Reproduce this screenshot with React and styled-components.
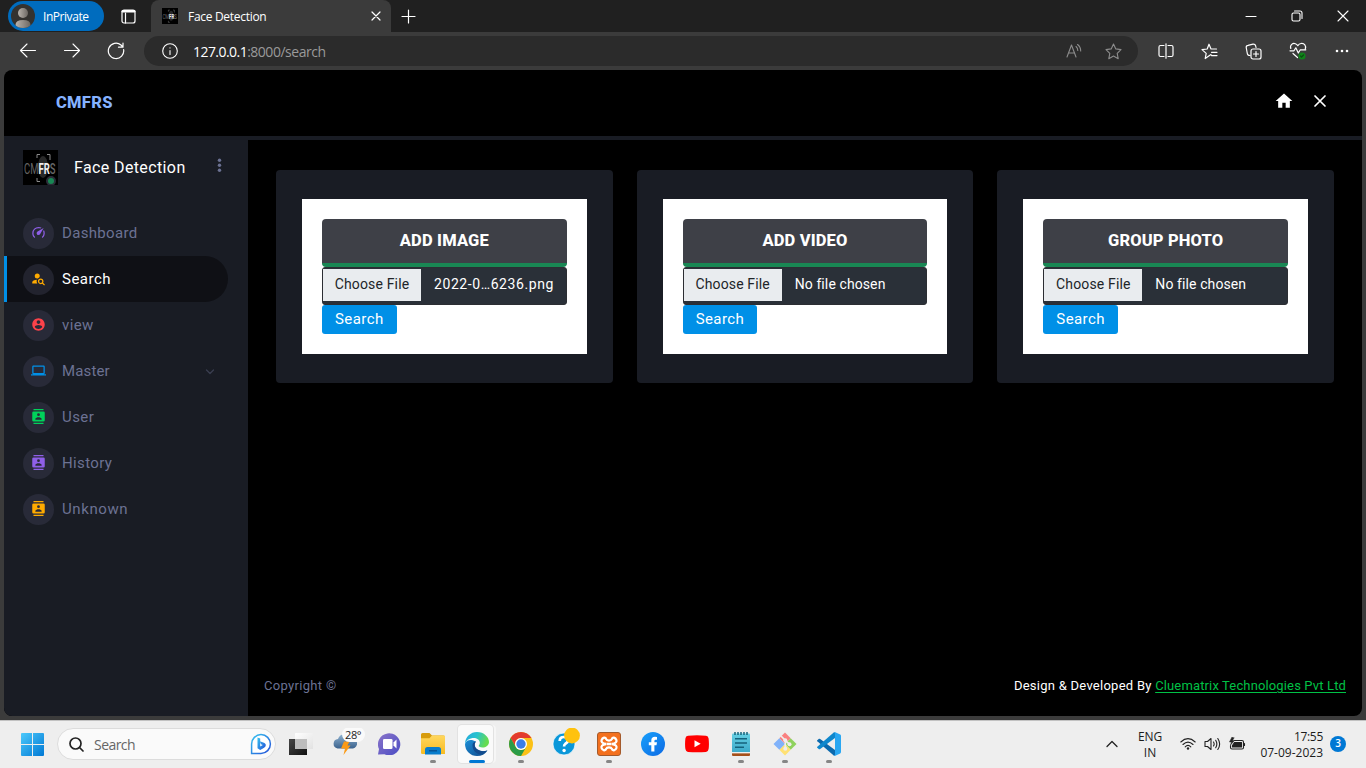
import React from "react";
import styled, { createGlobalStyle, css } from "styled-components";

const Global = createGlobalStyle`
  * { box-sizing: border-box; }
  body { margin: 0; background: #3b3b3b; overflow: hidden; }
  svg { display: block; flex: none; }
`;

const ui = `"Open Sans", "Noto Sans", sans-serif`;
const web = `Roboto, "Liberation Sans", sans-serif`;

const Screen = styled.div`
  width: 1366px;
  height: 768px;
  display: flex;
  flex-direction: column;
  background: #3b3b3b;
  font-family: ${ui};
  overflow: hidden;
`;

const Text = styled.span`
  font-size: ${(p) => p.$size || 12}px;
  letter-spacing: ${(p) => p.$track || 0}px;
  color: ${(p) => p.$color || "#fff"};
  font-weight: ${(p) => p.$weight || 400};
  white-space: pre;
`;

/* Browser frame */
const TabStrip = styled.header`
  height: 32px;
  flex: none;
  display: flex;
  align-items: center;
  padding-left: 8px;
  background: #202020;
`;
const Profile = styled.div`
  width: 96px;
  height: 30px;
  border-radius: 15px;
  background: #006cbe;
  display: flex;
  align-items: center;
  gap: 8px;
  padding-left: 3px;
`;
const WorkspaceButton = styled.div`
  width: 47px;
  display: flex;
  justify-content: center;
  padding-left: 1px;
`;
const Tab = styled.div`
  width: 240px;
  height: 32px;
  border-radius: 8px 8px 0 0;
  background: #3b3b3b;
  display: flex;
  align-items: center;
  padding: 0 10.5px 0 11px;
  gap: 10px;
  svg:last-child { margin-left: auto; }
`;
const NewTab = styled.div`
  width: 34px;
  display: flex;
  justify-content: center;
`;
const WindowControls = styled.div`
  margin-left: auto;
  display: grid;
  grid-template-columns: repeat(3, 46px);
  justify-items: center;
  align-items: center;
`;
const Toolbar = styled.nav`
  height: 38px;
  flex: none;
  display: flex;
  align-items: center;
  padding-left: 6px;
`;
const ToolButton = styled.div`
  width: 44px;
  height: 30px;
  display: flex;
  align-items: center;
  justify-content: center;
`;
const Address = styled.div`
  width: 994px;
  height: 30px;
  margin: 0 5.5px 0 6px;
  border-radius: 15px;
  background: #2b2b2b;
  display: flex;
  align-items: center;
  padding: 0 16.5px 0 18px;
`;
const Url = styled.div`
  margin-left: 15px;
  flex: 1;
  line-height: 20px;
`;
const AddressActions = styled.div`
  display: flex;
  gap: 23px;
  align-items: center;
`;

/* Web page */
const Page = styled.div`
  height: 646px;
  flex: none;
  margin: 0 4px;
  border-radius: 8px;
  background: #000;
  overflow: hidden;
  display: flex;
  flex-direction: column;
  font-family: ${web};
`;
const PageHeader = styled.div`
  height: 66px;
  flex: none;
  display: flex;
  align-items: center;
  justify-content: space-between;
  padding: 0 34px 2px 52px;
`;
const HeaderActions = styled.div`
  display: flex;
  align-items: center;
  gap: 18px;
  padding-bottom: 2px;
`;
const PageBody = styled.div`
  flex: 1;
  display: flex;
  border-top: 4px solid #191c24;
`;
const Sidebar = styled.aside`
  width: 244px;
  background: #191c24;
  margin-top: -4px;
  padding-top: 14px;
`;
const Brand = styled.div`
  height: 35px;
  display: flex;
  align-items: center;
  padding: 0 23px 0 19px;
  margin-bottom: 25px;
`;
const BrandName = styled.div`
  margin-left: 16px;
  flex: 1;
  line-height: 20px;
`;
const Menu = styled.div`
  display: flex;
  flex-direction: column;
`;
const MenuItem = styled.div`
  width: 224px;
  height: 46px;
  display: flex;
  align-items: center;
  padding: 1px 12px 0 16px;
  border-left: 3px solid transparent;
  svg.chevron { margin-left: auto; }
  ${(p) => p.$active && css`
    background: #0f1015;
    border-left-color: #0090e7;
    border-radius: 0 23px 23px 0;
  `}
`;
const Bubble = styled.div`
  width: 31px;
  height: 31px;
  border-radius: 50%;
  background: ${(p) => (p.$active ? "#22232e" : "#282a38")};
  display: flex;
  align-items: center;
  justify-content: center;
  padding-bottom: 2px;
  margin-right: 8px;
  color: ${(p) => p.$color};
`;
const MenuLabel = styled.div`
  line-height: 20px;
  padding-bottom: 2px;
`;
const Main = styled.main`
  flex: 1;
  display: flex;
  flex-direction: column;
  justify-content: space-between;
`;
const Cards = styled.div`
  display: grid;
  grid-template-columns: repeat(3, 1fr);
  gap: 24px;
  padding: 30px 28px 0;
`;
const Card = styled.section`
  height: 213px;
  border-radius: 4px;
  background: #191c24;
  padding: 29px 26px;
`;
const Form = styled.div`
  height: 155px;
  background: #fff;
  padding: 20px;
  display: flex;
  flex-direction: column;
  align-items: flex-start;
`;
const FormTitle = styled.div`
  align-self: stretch;
  height: 48px;
  border-radius: 4px;
  border-bottom: 4px solid #198754;
  background: #3e4047;
  display: flex;
  align-items: center;
  justify-content: center;
  padding-bottom: 2px;
`;
const FileInput = styled.div`
  align-self: stretch;
  height: 38px;
  border-radius: 3px;
  background: #2a3038;
  border: 1px solid #2c2e33;
  display: flex;
  align-items: flex-start;
  line-height: 32px;
`;
const ChooseButton = styled.div`
  width: 98px;
  height: 32px;
  margin-top: 1px;
  background: #e9ecef;
  text-align: center;
  line-height: 30px;
  margin-right: 13px;
`;
const SubmitButton = styled.div`
  width: 74.6px;
  height: 29px;
  border-radius: 3px;
  background: #0090e7;
  text-align: center;
  line-height: 28px;
`;
const Footer = styled.footer`
  height: 60px;
  display: flex;
  justify-content: space-between;
  padding: 20px 16px 0;
  line-height: 20px;
`;
const Link = styled.span`
  color: #00c146;
  letter-spacing: 0.14px;
  text-decoration: underline;
  text-underline-offset: 2px;
`;

/* Desktop taskbar */
const Taskbar = styled.div`
  height: 48px;
  flex: none;
  margin-top: 4px;
  background: #eee;
  border-top: 1px solid #c2c2c2;
  display: flex;
  align-items: center;
  padding-left: 10px;
`;
const StartButton = styled.div`
  width: 44px;
  display: flex;
  justify-content: center;
`;
const SearchBox = styled.div`
  width: 219px;
  height: 32px;
  margin: 0 3px 1px 3px;
  border-radius: 16px;
  background: #fafafa;
  border: 1px solid #dcdcdc;
  display: flex;
  align-items: center;
  padding: 0 3px 0 11px;
  gap: 10px;
  svg:last-child { margin-left: auto; }
`;
const AppSlot = styled.div`
  width: 44px;
  height: 47px;
  display: grid;
  grid-template-rows: 32px 3px;
  justify-items: center;
  justify-content: center;
  align-content: start;
  align-items: center;
  padding-top: 7px;
  ${(p) => p.$active && css`
    width: 35px;
    margin: 4px 6px 0 3px;
    height: 38px;
    padding: 3px 0 0 2px;
    align-self: flex-start;
    border-radius: 4px;
    background: #fafafa;
    box-shadow: 0 0 0 1px #e2e2e2, 3px 0 0 #f6f6f6;
  `}
`;
const Indicator = styled.div`
  width: ${(p) => (p.$active ? 16 : 6)}px;
  height: 3px;
  border-radius: 2px;
  background: ${(p) => (p.$active ? "#0078d4" : p.$running ? "#868686" : "transparent")};
`;
const Tray = styled.div`
  margin-left: auto;
  display: flex;
  align-items: center;
  padding-right: 20px;
  padding-bottom: 1px;
`;
const Language = styled.div`
  width: 40px;
  margin: 2px 10px 0 12px;
  text-align: center;
  line-height: 16px;
  display: flex;
  flex-direction: column;
`;
const Status = styled.div`
  display: flex;
  gap: 8px;
  align-items: center;
`;
const Clock = styled.div`
  width: 72px;
  margin: 1px 7px 0 5px;
  display: flex;
  flex-direction: column;
  align-items: flex-end;
  line-height: 16px;
`;
const Badge = styled.div`
  width: 16px;
  height: 16px;
  border-radius: 50%;
  background: #0078d4;
  text-align: center;
  line-height: 15px;
  font-size: 10px;
  font-weight: 600;
  color: #fff;
`;

/* Stroke icon on a viewBox equal to its pixel size */
const Line = ({ w = 18, h = 18, d, c = "#fff", sw = 1.1, children, className }) => (
  <svg className={className} width={w} height={h} viewBox={`0 0 ${w} ${h}`} fill="none" stroke={c} strokeWidth={sw} strokeLinecap="round" strokeLinejoin="round">
    {d && <path d={d} />}
    {children}
  </svg>
);
const Solid = ({ size, d }) => (
  <svg width={size} height={size} viewBox="0 0 24 24" fill="currentColor"><path d={d} /></svg>
);

const CONTACTS = "M20,0H4V2H20V0M4,24H20V22H4V24M20,4H4A2,2 0 0,0 2,6V18A2,2 0 0,0 4,20H20A2,2 0 0,0 22,18V6A2,2 0 0,0 20,4M12,6.75A2.25,2.25 0 0,1 14.25,9A2.25,2.25 0 0,1 12,11.25A2.25,2.25 0 0,1 9.75,9A2.25,2.25 0 0,1 12,6.75M17,17H7V15.5C7,13.83 10.33,13 12,13C13.67,13 17,13.83 17,15.5V17Z";
const SPEED = "M12 16A3 3 0 0 1 9 13C9 11.88 9.61 10.9 10.5 10.39L20.21 4.77L14.68 14.35C14.18 15.33 13.17 16 12 16M12 3C13.81 3 15.5 3.5 16.97 4.32L14.87 5.53C14 5.19 13 5 12 5A8 8 0 0 0 4 13C4 15.21 4.89 17.21 6.34 18.65H6.35C6.74 19.04 6.74 19.67 6.35 20.06C5.96 20.45 5.32 20.45 4.93 20.07C3.12 18.26 2 15.76 2 13A10 10 0 0 1 12 3M22 13C22 15.76 20.88 18.26 19.07 20.07C18.68 20.45 18.05 20.45 17.66 20.06C17.27 19.67 17.27 19.04 17.66 18.65C19.11 17.2 20 15.21 20 13C20 12 19.81 11 19.46 10.1L20.67 8C21.5 9.5 22 11.18 22 13Z";
const PERSON_SEARCH = "M15.5,12C18,12 20,14 20,16.5C20,17.38 19.75,18.21 19.31,18.9L22.39,22L21,23.39L17.88,20.32C17.19,20.75 16.37,21 15.5,21C13,21 11,19 11,16.5C11,14 13,12 15.5,12M15.5,14A2.5,2.5 0 0,0 13,16.5A2.5,2.5 0 0,0 15.5,19A2.5,2.5 0 0,0 18,16.5A2.5,2.5 0 0,0 15.5,14M10,4A4,4 0 0,1 14,8C14,8.91 13.69,9.75 13.18,10.43C12.32,10.75 11.55,11.26 10.91,11.9L10,12A4,4 0 0,1 6,8A4,4 0 0,1 10,4M2,20V18C2,15.88 5.31,14.14 9.5,14C9.18,14.78 9,15.62 9,16.5C9,17.79 9.38,19 10,20H2Z";
const ACCOUNT = "M12 2C6.48 2 2 6.48 2 12s4.48 10 10 10 10-4.48 10-10S17.52 2 12 2zm0 3c1.66 0 3 1.34 3 3s-1.34 3-3 3-3-1.34-3-3 1.34-3 3-3zm0 14.2c-2.5 0-4.71-1.28-6-3.22.03-1.99 4-3.08 6-3.08 1.99 0 5.97 1.09 6 3.08-1.29 1.94-3.5 3.22-6 3.22z";
const LAPTOP = "M4,6H20V16H4M20,18A2,2 0 0,0 22,16V6C22,4.89 21.1,4 20,4H4C2.89,4 2,4.89 2,6V16A2,2 0 0,0 4,18H0V20H24V18H20Z";

const menu = [
  { label: "Dashboard", color: "#8f5fe8", d: SPEED, track: 0.32 },
  { label: "Search", color: "#ffab00", d: PERSON_SEARCH, active: true, track: 0.5 },
  { label: "view", color: "#fc424a", d: ACCOUNT, track: 0.4 },
  { label: "Master", color: "#0090e7", d: LAPTOP, chevron: true, track: 0.15 },
  { label: "User", color: "#00d25b", d: CONTACTS, track: 0.45 },
  { label: "History", color: "#8f5fe8", d: CONTACTS, track: 0.35 },
  { label: "Unknown", color: "#ffab00", d: CONTACTS, track: 0.6 },
];

const forms = [
  { title: "ADD IMAGE", file: "2022-0…6236.png", fileTrack: 0.58 },
  { title: "ADD VIDEO", file: "No file chosen", fileTrack: 0.1 },
  { title: "GROUP PHOTO", file: "No file chosen", fileTrack: 0.1 },
];

const LogoMark = ({ size, dot }) => (
  <svg width={size} height={size} viewBox="0 0 35 35">
    <rect width="35" height="35" fill="#000" />
    <ellipse cx="20" cy="17" rx="5" ry="11" fill="#292929" />
    <path d="M14 8V4.500H17M24 4.500H27V10M14 28V31.500H17" fill="none" stroke="#999" strokeWidth=".9" />
    <text x="1" y="23.500" textLength="31.500" lengthAdjust="spacingAndGlyphs" fontFamily="Roboto, sans-serif" fontSize="15.500" fill="#666">
      CM<tspan fill="#eee" fontWeight="700">FR</tspan><tspan fontWeight="500">S</tspan>
    </text>
    {dot && <circle cx="28" cy="31" r="4" fill="#198754" stroke="#2b2d38" strokeWidth="2" />}
  </svg>
);

const Avatar = () => (
  <svg width="24" height="24" viewBox="0 0 24 24">
    <defs>
      <linearGradient id="av" x1="0" x2="1"><stop stopColor="#b9b3ac" /><stop offset="1" stopColor="#6d6863" /></linearGradient>
      <clipPath id="avc"><circle cx="12" cy="12" r="12" /></clipPath>
    </defs>
    <g clipPath="url(#avc)">
      <rect width="24" height="24" fill="#34322f" />
      <circle cx="12" cy="9" r="5" fill="url(#av)" />
      <path d="M4.500 24v-3q0-5 7.500-5t7.500 5v3z" fill="url(#av)" />
    </g>
  </svg>
);

const WindowsLogo = () => (
  <svg width="23" height="23" viewBox="0 0 23 23">
    <defs><linearGradient id="wl" x1="0" y1="0" x2="1" y2="1"><stop stopColor="#4cc9fb" /><stop offset="1" stopColor="#0078d4" /></linearGradient></defs>
    <path fill="url(#wl)" d="M1 0H11V11H0V1Q0 0 1 0M12 0H22Q23 0 23 1V11H12ZM0 12H11V23H1Q0 23 0 22ZM12 12H23V22Q23 23 22 23H12Z" />
  </svg>
);

const BingLogo = () => (
  <svg width="22" height="22" viewBox="0 0 22 22">
    <defs><linearGradient id="bg" x1="0" y1="0" x2="1" y2="1"><stop stopColor="#37c4f0" /><stop offset="1" stopColor="#2450d8" /></linearGradient></defs>
    <path d="M1.600 20.400V11A9.400 9.400 0 1 1 11 20.400Z" fill="#fff" stroke="url(#bg)" strokeWidth="1.500" />
    <path d="M7.500 4.500L10.200 5.500V13.500L12.800 12.100L11 11.200L9.900 8.300L14.500 10Q16.300 10.800 15.700 13Q15.200 14.500 10.200 17L7.500 15.300Z" fill="url(#bg)" />
  </svg>
);

const TaskView = () => (
  <svg width="24" height="24" viewBox="0 0 24 24">
    <defs>
      <linearGradient id="tv" x1="0" y1="0" x2="1" y2="1"><stop stopColor="#474747" /><stop offset="1" stopColor="#111" /></linearGradient>
      <linearGradient id="tw" x1="0" y1="0" x2="1" y2="1"><stop stopColor="#fff" /><stop offset="1" stopColor="#e2e2e2" /></linearGradient>
    </defs>
    <path fill="url(#tv)" d="M0 7H18V23H0Z" />
    <rect x="6" y="1" width="18" height="16" rx=".6" fill="url(#tw)" />
    <rect x="6" y="7" width="12" height="10" fill="#bdbdbd" />
  </svg>
);

const Weather = () => (
  <svg width="42" height="32" viewBox="1 1 42 32">
    <defs><linearGradient id="cl" x1="0" y1="0" x2="0" y2="1"><stop stopColor="#8fb2d0" /><stop offset="1" stopColor="#3c638e" /></linearGradient></defs>
    <path d="M14.500 21.500A4.800 4.800 0 0 1 15 12A7 7 0 0 1 28 11.500A5 5 0 0 1 30 21.500Z" fill="url(#cl)" />
    <path d="M21 14.500H26.500L24.500 18.500H27.500L20.500 28L22 21.500H18Z" fill="#fb9a16" />
    <rect x="19" y="0" width="23" height="15" rx="7.500" fill="#fafafa" />
    <text x="22" y="12" fontSize="11" fill="#222" textLength="16.500">28°</text>
  </svg>
);

const Chat = () => (
  <svg width="23" height="22" viewBox="0 0 23 22">
    <defs><linearGradient id="ct" x1="0" y1="0" x2="1" y2="1"><stop stopColor="#8b75c9" /><stop offset="1" stopColor="#4a4cc4" /></linearGradient></defs>
    <path d="M0 21.500L1 16A11.200 11 0 1 1 6.500 21.300Z" fill="url(#ct)" />
    <rect x="5" y="6" width="9.500" height="10" rx="1.300" fill="#fff" />
    <path d="M15.500 9.500L18.500 6.500V15.500L15.500 12.500Z" fill="#fff" />
  </svg>
);

const Folder = () => (
  <svg width="24" height="22" viewBox="0 0 24 22">
    <defs><linearGradient id="fd" x1="0" y1="0" x2="0" y2="1"><stop stopColor="#ffd75e" /><stop offset="1" stopColor="#f7bb21" /></linearGradient></defs>
    <path d="M0 1.500Q0 0 1.500 0H8.500L11 2.500H22.500Q24 2.500 24 4V8H0Z" fill="#d79b0c" />
    <path d="M0 5.200H8.500L11 2.500H23Q24 2.500 24 3.500V21H1.500Q0 21 0 20Z" fill="url(#fd)" />
    <path d="M4 21V16.500Q4 14 6.500 14H17.500Q20 14 20 16.500V21.500H4Z" fill="#087dcc" />
    <path d="M8 17.800H16" stroke="#06508f" strokeWidth="1.300" />
  </svg>
);

const Edge = () => (
  <svg width="24" height="24" viewBox="0 0 24 24">
    <defs>
      <linearGradient id="e1" x1="0" y1="0" x2="1" y2=".3"><stop stopColor="#27a7dd" /><stop offset=".5" stopColor="#26c2cf" /><stop offset="1" stopColor="#66dc4f" /></linearGradient>
      <linearGradient id="e2" x1="0" y1="0" x2="1" y2="1"><stop stopColor="#1b8fd8" /><stop offset="1" stopColor="#114a8b" /></linearGradient>
    </defs>
    <path d="M0 12A12 12 0 0 0 12 24Q19 24 22.400 18.500Q17 20.500 12.500 17.500C9 15 8.500 12 11 9.500C6 6.500 1 8 0 12Z" fill="url(#e2)" />
    <path d="M0 11.500A12 12 0 0 1 12 0C19 0 24 5 24 10C24 15 17.500 17 14 14.500C13 13.800 15 13 14.800 10.500C14.400 7 11 5.500 7.500 6Q2 6.800 0 11.500Z" fill="url(#e1)" />
    <path d="M7.500 13C7.500 18 10.500 22 16 22.500Q20 21.500 22.400 18.500Q16.500 20.500 12.500 17.500C9.500 15.300 9 12 11 9.500Q7.500 10 7.500 13Z" fill="#134b8d" />
  </svg>
);

const Chrome = () => (
  <svg width="24" height="24" viewBox="0 0 24 24">
    <circle cx="12" cy="12" r="12" fill="#fbc116" />
    <path d="M1.610 6A12 12 0 0 1 22.390 6H12A6 6 0 0 0 6.800 15Z" fill="#e33b2e" />
    <path d="M1.610 6A12 12 0 0 0 12 24L17.200 15A6 6 0 0 1 6.800 15Z" fill="#2a9b47" />
    <circle cx="12" cy="12" r="6" fill="#fff" />
    <circle cx="12" cy="12" r="4.700" fill="#3a7de8" />
  </svg>
);

const Help = () => (
  <svg width="30" height="32" viewBox="-2 -1 30 32">
    <circle cx="12" cy="15" r="11" fill="#0a97d9" stroke="#fff" strokeWidth=".7" />
    <path d="M7.700 12Q7.700 8 11.800 8Q16 8 16 11.300Q16 13.400 13.100 15Q12.100 15.700 12.100 17.500" fill="none" stroke="#fff" strokeWidth="2.700" />
    <circle cx="12.100" cy="21.500" r="1.700" fill="#fff" />
    <circle cx="20" cy="6.500" r="7.900" fill="#ffc20e" />
  </svg>
);

const Xampp = () => (
  <svg width="24" height="24" viewBox="0 0 24 24">
    <rect x=".5" y=".5" width="23" height="23" rx="2.500" fill="#f3701e" stroke="#a35a2c" />
    <path d="M9.500 12H14.500M9 12C4.800 11.500 4.200 9.500 4.600 8C5.500 5.200 8.500 5 9.300 7.300C9.800 9 14.200 9 14.700 7.300C15.500 5 18.500 5.200 19.400 8C19.800 9.500 19.200 11.500 15 12C19.200 12.500 19.800 14.500 19.400 16C18.500 18.800 15.500 19 14.700 16.700C14.200 15 9.800 15 9.300 16.700C8.500 19 5.500 18.800 4.600 16C4.200 14.500 4.800 12.500 9 12" fill="none" stroke="#fff" strokeWidth="2.300" />
  </svg>
);

const Facebook = () => (
  <svg width="24" height="24" viewBox="0 0 24 24">
    <defs><linearGradient id="fb" x1="0" y1="0" x2="1" y2="1"><stop stopColor="#18a0fb" /><stop offset="1" stopColor="#0d6ae4" /></linearGradient></defs>
    <circle cx="12" cy="12" r="12" fill="url(#fb)" />
    <path d="M10.300 19.500V13.300H7.800V10.300H10.300V8.500Q10.300 4.800 14 4.800L16 5V7.700H14.600Q13.400 7.700 13.400 9V10.300H16L15.500 13.300H13.400V19.500Z" fill="#fff" />
  </svg>
);

const Youtube = () => (
  <svg width="24" height="18" viewBox="0 0 24 18">
    <path d="M3 .7Q12-.3 21 .7Q23.300 1 23.600 3.500Q24.300 9 23.600 14Q23.300 16.500 21 16.900Q12 17.800 3 16.900Q.7 16.500 .4 14Q-.3 9 .4 3.500Q.7 1 3 .7Z" fill="#f00" />
    <path d="M9.500 5.300L15.700 8.800L9.500 12.300Z" fill="#fff" />
  </svg>
);

const Notepad = () => (
  <svg width="18" height="24" viewBox="0 0 18 24">
    <defs><linearGradient id="np" x1="0" y1="0" x2="0" y2="1"><stop stopColor="#66d0e4" /><stop offset="1" stopColor="#3aa8c8" /></linearGradient></defs>
    <rect y="20" width="18" height="4" rx="1" fill="#a5501b" />
    <rect y="1.500" width="18" height="19.500" rx="1" fill="url(#np)" />
    <path d="M0 20.700H18" stroke="#f4f4f4" strokeWidth="1.300" />
    <path d="M3 0V3M6 0V3M9 0V3M12 0V3M15 0V3" stroke="#17657e" strokeWidth="1.500" />
    <path d="M3 6.700H15M3 11H15M3 15.300H12" stroke="#14627c" strokeWidth="1.500" />
  </svg>
);

const Git = () => (
  <svg width="24" height="24" viewBox="0 0 24 24">
    <path d="M12 .5L17.700 6.200L12 12L6.300 6.200Z" fill="#fa8080" />
    <path d="M17.700 6.200L23.500 12L17.700 17.700L12 12Z" fill="#8fd25d" />
    <path d="M12 12L17.700 17.700L12 23.500L6.300 17.700Z" fill="#ffe173" />
    <path d="M6.300 6.200L12 12L6.300 17.700L.5 12Z" fill="#80b2fa" />
    <path d="M8 4L12.300 8.300V17M12.300 8.300L16.300 12.200" stroke="#eee" strokeWidth="1.700" fill="none" />
    <circle cx="12.300" cy="8.300" r="2" fill="#eee" /><circle cx="12.300" cy="16.800" r="2" fill="#eee" /><circle cx="16.500" cy="12.200" r="2" fill="#eee" />
  </svg>
);

const VSCode = () => (
  <svg width="24" height="24" viewBox="0 0 24 24">
    <path d="M0 8.500L2 6.700Q2.500 6.500 3.200 6.900L18 18V23.500L17 23.800L.3 9.300Q-.1 8.900 0 8.500Z" fill="#0b69ad" />
    <path d="M0 15.500L2 17.300Q2.500 17.500 3.200 17.100L18 6V.5L17 .2L.3 14.700Q-.1 15.100 0 15.500Z" fill="#0f87cc" />
    <path d="M17 .2Q17.600-.1 18.300.2L23.200 2.600Q24 3 24 4V20Q24 21 23.200 21.400L18.300 23.800Q17.600 24.100 17 23.800Q18 23.500 18 22V2Q18 .5 17 .2Z" fill="#29a7f2" />
  </svg>
);

const apps = [
  { Icon: TaskView }, { Icon: Weather }, { Icon: Chat }, { Icon: Folder, running: true },
  { Icon: Edge, active: true }, { Icon: Chrome, running: true }, { Icon: Help }, { Icon: Xampp, running: true },
  { Icon: Facebook }, { Icon: Youtube }, { Icon: Notepad, running: true }, { Icon: Git, running: true }, { Icon: VSCode, running: true },
];

export default function App() {
  return (
    <Screen>
      <Global />
      <TabStrip>
        <Profile><Avatar /><Text $size={12} $track={-0.45} $weight={500}>InPrivate</Text></Profile>
        <WorkspaceButton>
          <Line w={15} h={15} sw={1.2}><rect x="1" y="1" width="13" height="13" rx="2" /><path d="M4.500 4V14" /><path d="M1.800 2.300H13.200" strokeWidth="2.500" /></Line>
        </WorkspaceButton>
        <Tab>
          <LogoMark size={16} />
          <Text $size={12} $track={-0.3}>Face Detection</Text>
          <Line w={10} h={10} d="M1 1L9 9M9 1L1 9" sw={1.2} />
        </Tab>
        <NewTab><Line w={15} h={15} d="M7.500 1V14M1 7.500H14" sw={1.2} /></NewTab>
        <WindowControls>
          <Line w={12} h={12} d="M1 6.500H11" />
          <Line w={12} h={12}><rect x="1" y="3" width="8" height="8" rx="1.500" /><path d="M3.500 1H9Q11 1 11 3V8.500" /></Line>
          <Line w={12} h={12} d="M1 1L11 11M11 1L1 11" />
        </WindowControls>
      </TabStrip>

      <Toolbar>
        <ToolButton><Line w={18} h={16} d="M16.500 7.500H1.500M8 1L1.500 7.500L8 14" /></ToolButton>
        <ToolButton><Line w={18} h={16} d="M1.500 7.500H16.500M10 1L16.500 7.500L10 14" /></ToolButton>
        <ToolButton><Line w={18} h={18} d="M16.600 7.500A7.700 7.700 0 1 1 14 3L16 5M16 1V5.200H11.500" sw={1.2} /></ToolButton>
        <Address>
          <Line w={16} h={16}><circle cx="8" cy="8" r="7.300" /><path d="M8 7.500V11.500M8 4.800V5" sw={1.4} /></Line>
          <Url><Text $size={14} $track={-0.55}>127.0.0.1</Text><Text $size={14} $track={-0.48} $color="#9a9a9a">:8000/search</Text></Url>
          <AddressActions>
            <Line w={16} h={16} c="#8c8c8c" d="M1 14L5.500 2L10 14M2.500 10H8.500M10 3.500Q11.800 5 11.800 7.500M11.500 1.500Q14.700 3.800 14.700 8" />
            <Line w={17} h={17} c="#8c8c8c" d="M8.500 1L10.800 5.900L16 6.600L12.200 10.300L13.200 15.700L8.500 13.100L3.800 15.700L4.800 10.300L1 6.600L6.200 5.900Z" />
          </AddressActions>
        </Address>
        <ToolButton><Line w={16} h={16} d="M6 2.500H2.500Q1 2.500 1 4V12Q1 13.500 2.500 13.500H6M10 2.500H13.500Q15 2.500 15 4V12Q15 13.500 13.500 13.500H10M8 .8V15.200" sw={1.2} /></ToolButton>
        <ToolButton><Line w={17} h={17} d="M10 11.500L8.500 12.500L4.200 15.500L5.200 10.400L1 6.600L6.200 6L8 1.200L10 6H15.500M10.500 9.300H16M10.500 12.600H16" sw={1.2} /></ToolButton>
        <ToolButton><Line w={17} h={17} sw={1.2}><rect x="6" y="6" width="10" height="10" rx="2" /><path d="M11 8.500V13.500M8.500 11H13.500M5 12.500Q2.500 12.500 2.300 10.500L1.200 4.500Q1 2.600 3 2.300L8 1.200Q10.200 1 10.700 3L11 4.500" /></Line></ToolButton>
        <ToolButton>
          <Line w={18} h={18} d="M1.800 6.500C.5 3 4 .5 6.500 1.800Q8 2.500 8.800 3.700Q10 1.800 12 1.500C15.500 1 17.300 4 16.300 7M1 8.800H5L6.800 5.800L9.300 11L11.300 7.800H16.800M4 11.500L8.500 15.500" sw={1.2}>
            <circle cx="13" cy="14" r="3.600" fill="#10841a" stroke="none" /><path d="M11.600 14L12.600 15L14.500 13" stroke="#0a4d10" />
          </Line>
        </ToolButton>
        <ToolButton><svg width="14" height="4" viewBox="0 0 14 4" fill="#fff"><circle cx="2" cy="2" r="1.300" /><circle cx="7" cy="2" r="1.300" /><circle cx="12" cy="2" r="1.300" /></svg></ToolButton>
      </Toolbar>

      <Page>
        <PageHeader>
          <Text $size={16.5} $weight={800} $color="#85b2ff" $track={0.3}>CMFRS</Text>
          <HeaderActions>
            <svg width="20" height="20" viewBox="0 0 24 24" fill="#fff"><path d="M10,20V14H14V20H19V12H22L12,3L2,12H5V20H10Z" /></svg>
            <Line w={16} h={16} d="M3 3L13 13M13 3L3 13" sw={1.7} />
          </HeaderActions>
        </PageHeader>
        <PageBody>
          <Sidebar>
            <Brand>
              <LogoMark size={35} dot />
              <BrandName><Text $size={16} $track={0.38}>Face Detection</Text></BrandName>
              <svg width="12" height="19" viewBox="0 0 12 19" fill="#6c7293"><circle cx="6.500" cy="2.300" r="1.700" /><circle cx="6.500" cy="7.300" r="1.700" /><circle cx="6.500" cy="12.300" r="1.700" /></svg>
            </Brand>
            <Menu>
              {menu.map((m) => (
                <MenuItem key={m.label} $active={m.active}>
                  <Bubble $active={m.active} $color={m.color}><Solid size={15} d={m.d} /></Bubble>
                  <MenuLabel><Text $size={15} $track={m.track} $color={m.active ? "#fff" : "#6c7293"}>{m.label}</Text></MenuLabel>
                  {m.chevron && <Line className="chevron" w={12} h={8} d="M2.500 2L6 5.500L9.500 2" c="#3a3e50" sw={1.3} />}
                </MenuItem>
              ))}
            </Menu>
          </Sidebar>
          <Main>
            <Cards>
              {forms.map((f) => (
                <Card key={f.title}>
                  <Form>
                    <FormTitle><Text $size={16.5} $weight={800} $track={0.15}>{f.title}</Text></FormTitle>
                    <FileInput>
                      <ChooseButton><Text $size={14} $color="#212529" $track={0.15}>Choose File</Text></ChooseButton>
                      <Text $size={14} $track={f.fileTrack}>{f.file}</Text>
                    </FileInput>
                    <SubmitButton><Text $size={15} $track={0.42}>Search</Text></SubmitButton>
                  </Form>
                </Card>
              ))}
            </Cards>
            <Footer>
              <Text $size={13} $color="#6c7293" $track={0.32}>Copyright ©</Text>
              <Text $size={13} $track={0.26}>Design &amp; Developed By <Link>Cluematrix Technologies Pvt Ltd</Link></Text>
            </Footer>
          </Main>
        </PageBody>
      </Page>

      <Taskbar>
        <StartButton><WindowsLogo /></StartButton>
        <SearchBox>
          <Line w={15} h={15} c="#222" sw={1.7}><circle cx="6.500" cy="6.500" r="5.500" /><path d="M10.500 10.500L14 14" /></Line>
          <Text $size={14} $color="#666" $track={-0.55}>Search</Text>
          <BingLogo />
        </SearchBox>
        {apps.map(({ Icon, active, running }, i) => (
          <AppSlot key={i} $active={active}><Icon /><Indicator $active={active} $running={running} /></AppSlot>
        ))}
        <Tray>
          <Line w={12} h={8} d="M1 6.500L6 1.500L11 6.500" c="#222" sw={1.3} />
          <Language><Text $color="#1c1c1c" $track={-0.2}>ENG</Text><Text $color="#1c1c1c">IN</Text></Language>
          <Status>
            <Line w={16} h={14} c="#222" sw={1.1} d="M.8 5Q8-1.600 15.200 5M3 7.500Q8 2.700 13 7.500M5.200 9.800Q8 7 10.800 9.800"><circle cx="8" cy="11.500" r="1.200" fill="#222" stroke="none" /></Line>
            <Line w={17} h={14} c="#222" sw={1.1} d="M1 4.500H3.500L7 1.500V12.500L3.500 9.500H1ZM9.500 5Q10.800 7 9.500 9M11.700 3.300Q14 7 11.700 10.700M13.800 1.500Q17.500 7 13.800 12.500" />
            <Line w={17} h={14} c="#222" sw={1.1}><path d="M5.500 3.500H13Q14.500 3.500 14.500 5V10.500Q14.500 12 13 12H3Q1.500 12 1.500 10.500V8.500M15.500 6.500V8.500" /><path d="M5.500 5.500H12.500V10H3.500V8.500Z" fill="#222" /><path d="M3 0L.5 5H2.500L1.500 8L5.500 3.500H3.500L5 1Z" fill="#222" strokeWidth=".5" /></Line>
          </Status>
          <Clock><Text $color="#1c1c1c" $track={-0.3}>17:55</Text><Text $color="#1c1c1c" $track={0}>07-09-2023</Text></Clock>
          <Badge>3</Badge>
        </Tray>
      </Taskbar>
    </Screen>
  );
}
